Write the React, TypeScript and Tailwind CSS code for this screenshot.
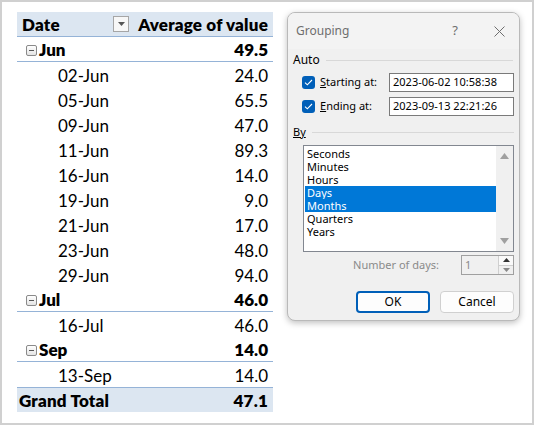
import React from "react";

type Row =
  | { kind: "month"; label: string; value: string }
  | { kind: "day"; label: string; value: string };

const rows: Row[] = [
  { kind: "month", label: "Jun", value: "49.5" },
  { kind: "day", label: "02-Jun", value: "24.0" },
  { kind: "day", label: "05-Jun", value: "65.5" },
  { kind: "day", label: "09-Jun", value: "47.0" },
  { kind: "day", label: "11-Jun", value: "89.3" },
  { kind: "day", label: "16-Jun", value: "14.0" },
  { kind: "day", label: "19-Jun", value: "9.0" },
  { kind: "day", label: "21-Jun", value: "17.0" },
  { kind: "day", label: "23-Jun", value: "48.0" },
  { kind: "day", label: "29-Jun", value: "94.0" },
  { kind: "month", label: "Jul", value: "46.0" },
  { kind: "day", label: "16-Jul", value: "46.0" },
  { kind: "month", label: "Sep", value: "14.0" },
  { kind: "day", label: "13-Sep", value: "14.0" },
];

const units = ["Seconds", "Minutes", "Hours", "Days", "Months", "Quarters", "Years"];
const selected = ["Days", "Months"];

function MinusBox() {
  return (
    <span className="w-[11px] h-[11px] border border-[#8a8a8a] rounded-[2px] bg-gradient-to-b from-white to-[#e4e4e4] flex items-center justify-center mr-[2px]">
      <span className="w-[5px] h-px bg-[#555]" />
    </span>
  );
}

function PivotTable() {
  return (
    <div className="w-[256px] text-[17px] text-black" style={{ fontFamily: "Lato, 'Liberation Sans', sans-serif" }}>
      {/* header */}
      <div className="h-[25px] pt-[2px] flex items-center bg-[#dce6f1] border-b border-[#95b3d7] font-extrabold tracking-[0.2px]">
        <span className="pl-[5px] w-[96px]">Date</span>
        <span className="w-[16px] h-[16px] -mt-[2px] border border-[#a6a6a6] bg-[#f7f7f7] flex items-center justify-center">
          <svg width="7" height="4" viewBox="0 0 7 4">
            <path d="M0 0h7L3.5 4z" fill="#555" />
          </svg>
        </span>
        <span className="flex-1 text-right pr-[5px]">Average of value</span>
      </div>
      {rows.map((r) =>
        r.kind === "month" ? (
          <div key={r.label} className="h-[25px] pt-[2px] flex items-center border-b border-[#95b3d7] font-extrabold">
            <span className="pl-[9px] flex items-center">
              <MinusBox />
              {r.label}
            </span>
            <span className="flex-1 text-right pr-[5px]">{r.value}</span>
          </div>
        ) : (
          <div key={r.label} className="h-[25px] pt-[2px] flex items-center">
            <span className="pl-[41px]">{r.label}</span>
            <span className="flex-1 text-right pr-[5px]">{r.value}</span>
          </div>
        )
      )}
      <div className="h-[25px] pt-[2px] flex items-center bg-[#dce6f1] border-t border-[#95b3d7] font-extrabold tracking-[0.2px]">
        <span className="pl-[2px]">Grand Total</span>
        <span className="flex-1 text-right pr-[5px]">47.1</span>
      </div>
    </div>
  );
}

function Check() {
  return (
    <span className="w-[13px] h-[13px] rounded-[3px] bg-[#005fb8] flex items-center justify-center">
      <svg width="9" height="7" viewBox="0 0 9 7">
        <path d="M1 3.6l2.3 2.2L8 1" fill="none" stroke="white" strokeWidth="1.1" />
      </svg>
    </span>
  );
}

function GroupingDialog() {
  return (
    <div
      className="w-[233px] h-[309px] rounded-[8px] border border-[#b9b9b9] bg-[#f0f0f0] shadow-[0_2px_6px_rgba(0,0,0,0.25)] text-[11px] text-black flex flex-col overflow-hidden"
      style={{ fontFamily: "'Noto Sans', 'Open Sans', sans-serif" }}
    >
      {/* title bar */}
      <div className="h-[36px] bg-[#f3f3f3] flex items-center pl-[8px] pr-[14px] text-[#6e6e6e]">
        <span className="flex-1 text-[12px]">Grouping</span>
        <span className="text-[13px] mr-[36px]">?</span>
        <svg width="11" height="11" viewBox="0 0 11 11">
          <path d="M0.5 0.5l10 10M10.5 0.5l-10 10" stroke="#6e6e6e" strokeWidth="1" />
        </svg>
      </div>

      <div className="px-[5px] pt-[3px] flex flex-col">
        <div className="flex items-center gap-[6px] h-[16px]">
          <span className="text-[12px]">Auto</span>
          <span className="flex-1 h-px bg-[#d8d8d8] mr-[1px]" />
        </div>

        <div className="mt-[5px] ml-[9px] flex items-center h-[19px]">
          <Check />
          <span className="ml-[5px] w-[69px]">
            <span className="underline">S</span>tarting at:
          </span>
          <span className="flex-1 h-[19px] border border-[#7a7a7a] bg-white flex items-center pl-[3px]">
            2023-06-02 10:58:38
          </span>
        </div>
        <div className="mt-[5px] ml-[9px] flex items-center h-[19px]">
          <Check />
          <span className="ml-[5px] w-[69px]">
            <span className="underline">E</span>nding at:
          </span>
          <span className="flex-1 h-[19px] border border-[#7a7a7a] bg-white flex items-center pl-[3px]">
            2023-09-13 22:21:26
          </span>
        </div>

        <div className="mt-[8px] flex items-center gap-[6px] h-[16px]">
          <span className="underline">By</span>
          <span className="flex-1 h-px bg-[#d8d8d8]" />
        </div>

        <div className="mt-[5px] ml-[10px] h-[107px] border border-[#828790] bg-white flex">
          <div className="flex-1 pt-[1px] pl-[1px] flex flex-col">
            {units.map((u) => (
              <div
                key={u}
                className={
                  "h-[13px] leading-[13px] pl-[2px] " +
                  (selected.includes(u) ? "bg-[#0078d7] text-white" : "")
                }
              >
                {u}
              </div>
            ))}
          </div>
          <div className="w-[17px] bg-[#f0f0f0] flex flex-col items-center justify-between py-[7px]">
            <svg width="9" height="6" viewBox="0 0 9 6">
              <path d="M0 6L4.5 0 9 6z" fill="#a0a0a0" />
            </svg>
            <svg width="9" height="6" viewBox="0 0 9 6">
              <path d="M0 0h9L4.5 6z" fill="#a0a0a0" />
            </svg>
          </div>
        </div>

        <div className="mt-[3px] flex items-center justify-end h-[20px]">
          <span className="text-[#8a8a8a] mr-[22px]">Number of days:</span>
          <span className="w-[53px] h-[20px] border border-[#a0a0a0] bg-[#f0f0f0] flex">
            <span className="flex-1 pl-[3px] text-[#8a8a8a] leading-[18px]">1</span>
            <span className="w-[15px] border-l border-[#cfcfcf] flex flex-col">
              <span className="flex-1 flex items-center justify-center bg-[#fafafa] border-b border-[#cfcfcf]">
                <svg width="7" height="4" viewBox="0 0 7 4">
                  <path d="M0 4L3.5 0 7 4z" fill="#333" />
                </svg>
              </span>
              <span className="flex-1 flex items-center justify-center">
                <svg width="7" height="4" viewBox="0 0 7 4">
                  <path d="M0 0h7L3.5 4z" fill="#888" />
                </svg>
              </span>
            </span>
          </span>
        </div>

        <div className="mt-[16px] flex justify-end gap-[10px]">
          <button className="w-[74px] h-[22px] rounded-[4px] border-2 border-[#005fb8] bg-[#fdfdfd] flex items-center justify-center text-[12px]">
            OK
          </button>
          <button className="w-[74px] h-[22px] rounded-[4px] border border-[#d0d0d0] bg-[#fdfdfd] flex items-center justify-center text-[12px]">
            Cancel
          </button>
        </div>
      </div>
    </div>
  );
}

export default function App() {
  return (
    <div className="w-[536px] h-[426px] bg-white">
      <div className="w-[534px] h-[425px] border-2 border-[#d0d0d0] pl-[15px] pt-[10px] flex items-start gap-[14px]">
        <PivotTable />
        <GroupingDialog />
      </div>
    </div>
  );
}
